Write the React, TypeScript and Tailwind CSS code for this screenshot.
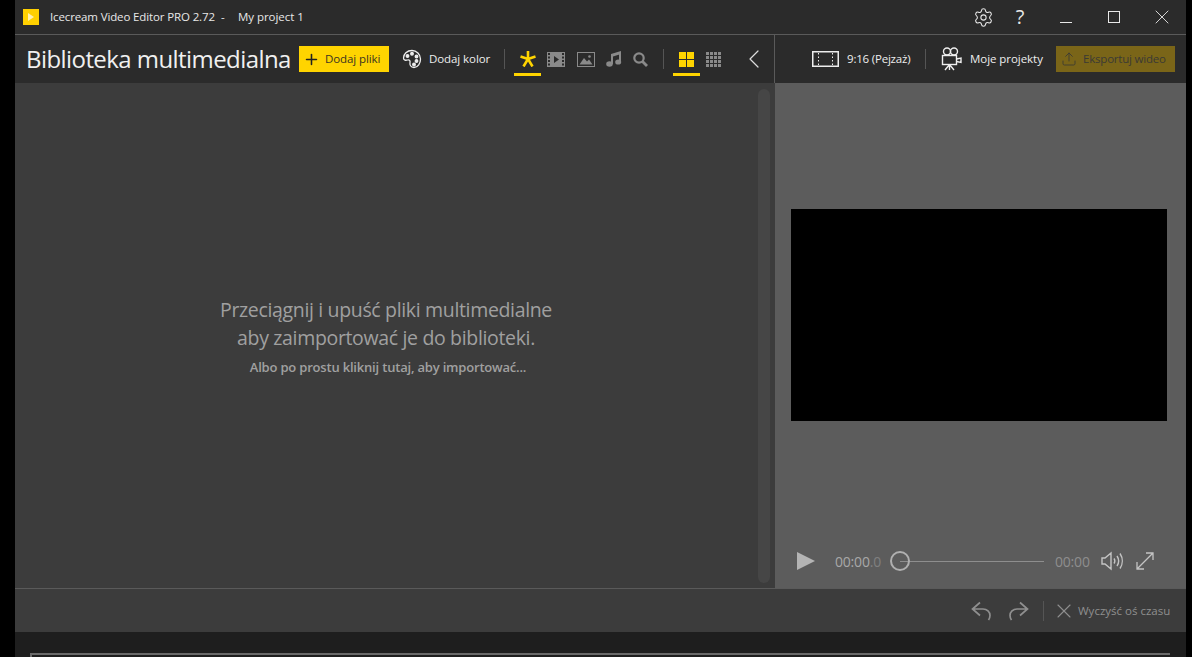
import { Settings, ChevronLeft, Plus, Upload, X } from "lucide-react";

const font = { fontFamily: '"Open Sans", "Noto Sans", sans-serif' };

function TitleBar() {
  return (
    <div className="flex h-[35px] shrink-0 items-center border-b border-[#5a5a5a] bg-[#2b2b2b] text-[#e8e8e8]">
      <div className="ml-[8px] flex h-[16px] w-[16px] items-center justify-center bg-[#ffd000]">
        <svg width="6" height="8" viewBox="0 0 6 8"><path d="M0 0l6 4-6 4z" fill="#fff0b0" /></svg>
      </div>
      <span className="ml-[11px] w-[171px] whitespace-nowrap text-[11.5px] tracking-[-0.13px]">Icecream Video Editor PRO 2.72</span>
      <span className="w-[17px] text-[11.5px]">-</span>
      <span className="w-[66px] whitespace-nowrap text-[11.5px] tracking-[-0.05px]">My project 1</span>
      <Settings size={21} strokeWidth={1.2} className="ml-[669px]" />
      <span className="ml-[19px] w-[14px] text-center text-[20px] leading-none">?</span>
      <span className="ml-[33px] mt-[10px] h-px w-[12px] bg-[#e8e8e8]" />
      <span className="ml-[36px] h-[12px] w-[12px] border border-[#e8e8e8]" />
      <X size={24} strokeWidth={0.9} className="ml-[30px]" />
    </div>
  );
}

function Tab({ active, children }: { active?: boolean; children: React.ReactNode }) {
  return (
    <div className="relative flex h-[48px] w-[27px] items-center justify-center">
      {children}
      {active && <span className="absolute bottom-[7px] left-0 h-[3px] w-[27px] bg-[#ffd400]" />}
    </div>
  );
}

function LibraryToolbar() {
  return (
    <div className="flex h-[48px] w-[760px] shrink-0 items-center border-r border-[#5a5a5a] bg-[#2b2b2b]">
      <h1 className="ml-[11px] w-[273px] whitespace-nowrap text-[24px] leading-none tracking-[-0.57px] text-[#f0f0f0]">Biblioteka multimedialna</h1>
      <button className="flex h-[26px] w-[90px] items-center bg-[#ffd400] text-[11.5px] tracking-[-0.1px] text-[#3a3320]">
        <Plus size={17} strokeWidth={2.2} className="ml-[4px] text-[#222]" />
        <span className="ml-[5px]">Dodaj pliki</span>
      </button>
      <svg className="ml-[13px]" width="20" height="20" viewBox="0 0 20 20" fill="none" stroke="#eee" strokeWidth="1.3">
        <path d="M10 1.500c-5 0-8.500 3.600-8.500 7.500 0 2.500 2.500 2.500 4 2 1.500-.5 3 .5 2.500 2.500-.4 2 .5 5 4 5 4 0 6.500-4 6.500-8.500S14.500 1.500 10 1.500z" />
        <circle cx="5.500" cy="7" r="1.300" fill="#eee" />
        <circle cx="10" cy="4.800" r="1.300" fill="#eee" />
        <circle cx="14.500" cy="7.500" r="1.300" fill="#eee" />
        <circle cx="14.500" cy="12" r="1.300" fill="#eee" />
        <circle cx="12" cy="15.500" r="1.300" fill="#eee" />
      </svg>
      <span className="ml-[7px] w-[62px] whitespace-nowrap text-[11.5px] tracking-[-0.08px] text-[#eee]">Dodaj kolor</span>
      <span className="ml-[13px] h-[20px] w-px bg-[#555]" />
      <div className="ml-[9px] flex items-center">
        <Tab active>
          <svg width="16" height="16" viewBox="0 0 16 16" stroke="#ffd400" strokeWidth="2.600"><path d="M8 0v8M8 8L.5 5.500M8 8l7.500-2.500M8 8l-4.500 7.500M8 8l4.500 7.500" fill="none" /></svg>
        </Tab>
        <svg className="ml-[6px]" width="18" height="15" viewBox="0 0 18 15"><path fillRule="evenodd" d="M0 0h18v15H0zM1 1v2h2V1zM1 4.500v2h2v-2zM1 8v2h2V8zM1 11.500v2h2v-2zM15 1v2h2V1zM15 4.500v2h2v-2zM15 8v2h2V8zM15 11.500v2h2v-2zM7 4v7l5-3.500z" fill="#8a8a8a" /></svg>
        <svg className="ml-[12px]" width="18" height="15" viewBox="0 0 18 15" fill="none"><rect x=".5" y=".5" width="17" height="14" stroke="#8a8a8a" /><path d="M2.500 12.500L7 6l3 3.500 2-2 3.500 5z" fill="#8a8a8a" /><circle cx="12.500" cy="4.500" r="1.300" fill="#8a8a8a" /></svg>
        <svg className="ml-[11px]" width="16" height="16" viewBox="0 0 16 16" fill="#8a8a8a"><path d="M5 3l10-3v3L7 5.500V13H5zM13 1h2v10h-2z" /><ellipse cx="3.500" cy="13" rx="3.300" ry="2.700" /><ellipse cx="12.200" cy="11" rx="3" ry="2.600" /></svg>
        <svg className="ml-[11px]" width="15" height="15" viewBox="0 0 15 15" fill="none" stroke="#8a8a8a">
          <circle cx="6" cy="6" r="4.700" strokeWidth="2.200" />
          <path d="M9.500 9.500l4.500 4.500" strokeWidth="2.800" />
        </svg>
      </div>
      <span className="ml-[15px] h-[20px] w-px bg-[#555]" />
      <div className="ml-[9px] flex items-center">
        <Tab active>
          <div className="grid h-[15px] w-[15px] grid-cols-2 gap-px">
            <span className="bg-[#ffd400]" /><span className="bg-[#ffd400]" /><span className="bg-[#ffd400]" /><span className="bg-[#ffd400]" />
          </div>
        </Tab>
        <svg className="ml-[6px]" width="15" height="15" viewBox="0 0 15 15" fill="#8a8a8a"><path d="M0 0h3v3H0zM4 0h3v3H4zM8 0h3v3H8zM12 0h3v3h-3zM0 4h3v3H0zM4 4h3v3H4zM8 4h3v3H8zM12 4h3v3h-3zM0 8h3v3H0zM4 8h3v3H4zM8 8h3v3H8zM12 8h3v3h-3zM0 12h3v3H0zM4 12h3v3H4zM8 12h3v3H8zM12 12h3v3h-3z" /></svg>
      </div>
      <ChevronLeft size={32} strokeWidth={0.9} className="ml-[17px] text-[#ddd]" />
    </div>
  );
}

function PreviewToolbar() {
  return (
    <div className="flex h-[48px] flex-1 items-center bg-[#2b2b2b] text-[11.5px] tracking-[-0.2px] text-[#eee]">
      <svg className="ml-[37px]" width="27" height="16" viewBox="0 0 27 16" fill="none" stroke="#eee">
        <rect x=".75" y=".75" width="25.500" height="14.500" strokeWidth="1.500" />
        <path d="M6.500 2v12M20.500 2v12" strokeDasharray="1.500 2" />
      </svg>
      <span className="ml-[8px] w-[64px] whitespace-nowrap">9:16 (Pejzaż)</span>
      <span className="ml-[14px] h-[20px] w-px bg-[#555]" />
      <svg className="ml-[15px]" width="21" height="24" viewBox="0 0 21 24" fill="none" stroke="#eee" strokeWidth="1.400">
        <circle cx="6" cy="4.500" r="3.500" />
        <circle cx="13" cy="4.500" r="3.500" />
        <rect x="1.500" y="8.500" width="14" height="9" />
        <path d="M15.500 12l4.500-1v4.500l-4.500-1M8.500 17.500L4 23M8.500 17.500L13 23M8.500 17.500V23" />
      </svg>
      <span className="ml-[8px] w-[74px] whitespace-nowrap tracking-[-0.05px]">Moje projekty</span>
      <button className="ml-[12px] flex h-[26px] w-[119px] items-center bg-[#7a6518] text-[#3b3a34]">
        <Upload size={16} strokeWidth={1.3} className="ml-[5px]" />
        <span className="ml-[6px] whitespace-nowrap">Eksportuj wideo</span>
      </button>
    </div>
  );
}

function Library() {
  return (
    <div className="relative flex w-[760px] shrink-0 flex-col items-center justify-center bg-[#3c3c3c] pr-[18px] pt-[2px] text-[#a0a0a0]">
      <p className="text-center text-[19.5px] leading-[28px] tracking-[-0.34px]">
        Przeciągnij i upuść pliki multimedialne
        <br />
        aby zaimportować je do biblioteki.
      </p>
      <p className="ml-[4px] mt-[6px] text-[13px] font-semibold tracking-[-0.19px]">Albo po prostu kliknij tutaj, aby importować...</p>
      <div className="absolute bottom-[5px] right-[5px] top-[6px] w-[12px] rounded-full bg-[#464646]" />
    </div>
  );
}

function Preview() {
  return (
    <div className="flex flex-1 flex-col bg-[#5c5c5c] pl-[16px] pr-[19px]">
      <div className="mt-[126px] h-[212px] w-[376px] bg-black" />
      <div className="mt-[124px] flex h-[32px] items-center text-[14px] tracking-[-0.2px]">
        <svg className="ml-[6px]" width="18" height="20" viewBox="0 0 18 20"><path d="M0 1l18 9L0 19z" fill="#b4b4b4" /></svg>
        <span className="ml-[20px] w-[46px] whitespace-nowrap text-[#a8a8a8]">00:00<span className="text-[#808080]">.0</span></span>
        <div className="relative ml-[19px] h-[1px] w-[144px] bg-[#8e8e8e]">
          <span className="absolute left-[-10px] top-[-10px] h-[20px] w-[20px] rounded-full border-2 border-[#b0b0b0]" />
        </div>
        <span className="ml-[11px] w-[35px] text-[#8e8e8e]">00:00</span>
        <svg className="ml-[11px]" width="23" height="20" viewBox="0 0 23 20" fill="none" stroke="#c4c4c4" strokeWidth="1.400">
          <path d="M1 7v6h3l6 5V2L4 7zM13 7.500c1 1.500 1 3.500 0 5M16 5c2 3 2 7 0 10M19 2.500c3 4.500 3 10.500 0 15" />
        </svg>
        <svg className="ml-[12px]" width="18" height="18" viewBox="0 0 18 18" fill="none" stroke="#c4c4c4" strokeWidth="1.300">
          <path d="M1 17L17 1M10 1h7v7M1 10v7h7" />
        </svg>
      </div>
    </div>
  );
}

function TimelineBar() {
  return (
    <div className="flex h-[44px] shrink-0 items-center border-t border-[#5a5a5a] bg-[#3c3c3c] text-[#8f8f8f]">
      <svg className="ml-[956px]" width="20" height="20" viewBox="0 0 20 20" fill="none" stroke="#8f8f8f" strokeWidth="1.700">
        <path d="M9 1.500L1.500 8 9 14.500M1.500 8H12c4 0 7 3 7 6.500 0 1.500-.5 3-1.500 4.500" />
      </svg>
      <svg className="ml-[18px]" width="20" height="20" viewBox="0 0 20 20" fill="none" stroke="#8f8f8f" strokeWidth="1.700">
        <path d="M11 1.500L18.500 8 11 14.500M18.500 8H8c-4 0-7 3-7 6.500 0 1.500.5 3 1.500 4.500" />
      </svg>
      <span className="ml-[14px] h-[20px] w-px bg-[#555]" />
      <X size={24} strokeWidth={1.1} className="ml-[8px]" />
      <span className="ml-[2px] whitespace-nowrap text-[11.5px]">Wyczyść oś czasu</span>
    </div>
  );
}

export default function App() {
  return (
    <div className="flex h-[657px] w-[1192px] overflow-hidden bg-black pl-[15px] pr-[6px]" style={font}>
      <div className="flex min-w-0 flex-1 flex-col">
        <TitleBar />
        <div className="flex shrink-0">
          <LibraryToolbar />
          <PreviewToolbar />
        </div>
        <div className="flex h-[505px] shrink-0">
          <Library />
          <Preview />
        </div>
        <TimelineBar />
        <div className="flex-1 bg-[#1e1e1e] pl-[15px] pr-[16px] pt-[21px]">
          <div className="h-full border-l-2 border-t-2 border-[#6a6a6a]" />
        </div>
      </div>
    </div>
  );
}
